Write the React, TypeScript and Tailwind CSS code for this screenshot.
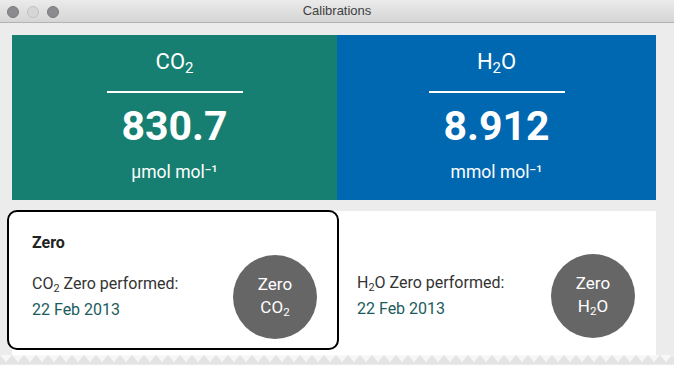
import React from 'react';

const font = { fontFamily: 'Roboto, "Noto Sans", sans-serif' };

function Sub({ children, className = '' }: { children: React.ReactNode; className?: string }) {
  return <span className={`relative text-[0.68em] top-[0.28em] ${className}`}>{children}</span>;
}

function Reading({ bg, label, value, unit }: { bg: string; label: React.ReactNode; value: string; unit: string }) {
  return (
    <div className={`${bg} flex flex-col items-center text-white`}>
      <div className="mt-[14px] text-[22px] leading-[26px] font-normal">{label}</div>
      <div className="mt-[14px] h-[2px] w-[136px] bg-white" />
      <div className="mt-[9px] text-[41px] leading-[48px] font-bold">{value}</div>
      <div className="mt-[12px] text-[17.5px] leading-[20px]">{unit}</div>
    </div>
  );
}

function ZeroButton({ gas }: { gas: React.ReactNode }) {
  return (
    <button className="w-[84px] h-[84px] rounded-full bg-[#666666] text-white text-[17px] leading-[23px] flex flex-col items-center justify-center shrink-0">
      <span>Zero</span>
      <span>{gas}</span>
    </button>
  );
}

function Performed({ gas }: { gas: React.ReactNode }) {
  return (
    <div className="text-[16px] leading-[24px]">
      <div className="text-[#333333]">{gas} Zero performed:</div>
      <div className="text-[#1b5b5b]">22 Feb 2013</div>
    </div>
  );
}

export default function App() {
  const co2 = (
    <>
      CO<Sub>2</Sub>
    </>
  );
  const h2o = (
    <>
      H<Sub>2</Sub>O
    </>
  );

  return (
    <div className="w-[674px] h-[365px] bg-[#ececec] flex flex-col overflow-hidden" style={font}>
      {/* Title bar */}
      <div className="relative h-[23px] shrink-0 bg-gradient-to-b from-[#ebebeb] to-[#d5d5d5] border-b border-[#b3b3b3] flex items-center justify-center">
        <div className="absolute left-[7px] top-[6px] flex gap-[8px]">
          <div className="w-[12px] h-[12px] rounded-full bg-[#8c8c90] border border-[#7a7a7e]" />
          <div className="w-[12px] h-[12px] rounded-full bg-[#d6d6d6] border border-[#c2c2c2]" />
          <div className="w-[12px] h-[12px] rounded-full bg-[#8c8c90] border border-[#7a7a7e]" />
        </div>
        <span className="text-[13px] text-[#3f3f3f]" style={{ fontFamily: '"Liberation Sans", Arial, sans-serif' }}>
          Calibrations
        </span>
      </div>

      <div className="pl-[12px] pr-[18px] pt-[12px] flex flex-col">
        {/* Readings */}
        <div className="grid grid-cols-[325px_1fr] h-[165px]">
          <Reading bg="bg-[#167f71]" label={co2} value="830.7" unit="μmol mol⁻¹" />
          <Reading bg="bg-[#0068b1]" label={h2o} value="8.912" unit="mmol mol⁻¹" />
        </div>

        {/* Zero panels */}
        <div className="mt-[11px] h-[145px] bg-white flex items-start">
          <div className="-ml-[5px] -mt-[1px] w-[332px] h-[140px] border-2 border-black rounded-[10px] bg-white pl-[23px] pr-[20px] pt-[21px] flex flex-col">
            <div className="text-[16px] leading-[19px] font-bold text-[#222222]">Zero</div>
            <div className="mt-[3px] flex items-center justify-between">
              <Performed gas={co2} />
              <ZeroButton gas={co2} />
            </div>
          </div>
          <div className="flex-1 pl-[18px] pr-[21px] pt-[43px] flex items-center justify-between">
            <Performed gas={h2o} />
            <ZeroButton gas={h2o} />
          </div>
        </div>
      </div>

      {/* Torn edge */}
      <svg width="674" height="9" className="shrink-0 -mt-[1px] bg-[#e4e4e4]">
        <polygon
          fill="#f7f7f7"
          points={
            '0,0 ' +
            Array.from({ length: 57 }, (_, i) => `${i * 12 + 6},7 ${i * 12 + 12},0`).join(' ') +
            ' 674,0'
          }
        />
      </svg>
    </div>
  );
}
